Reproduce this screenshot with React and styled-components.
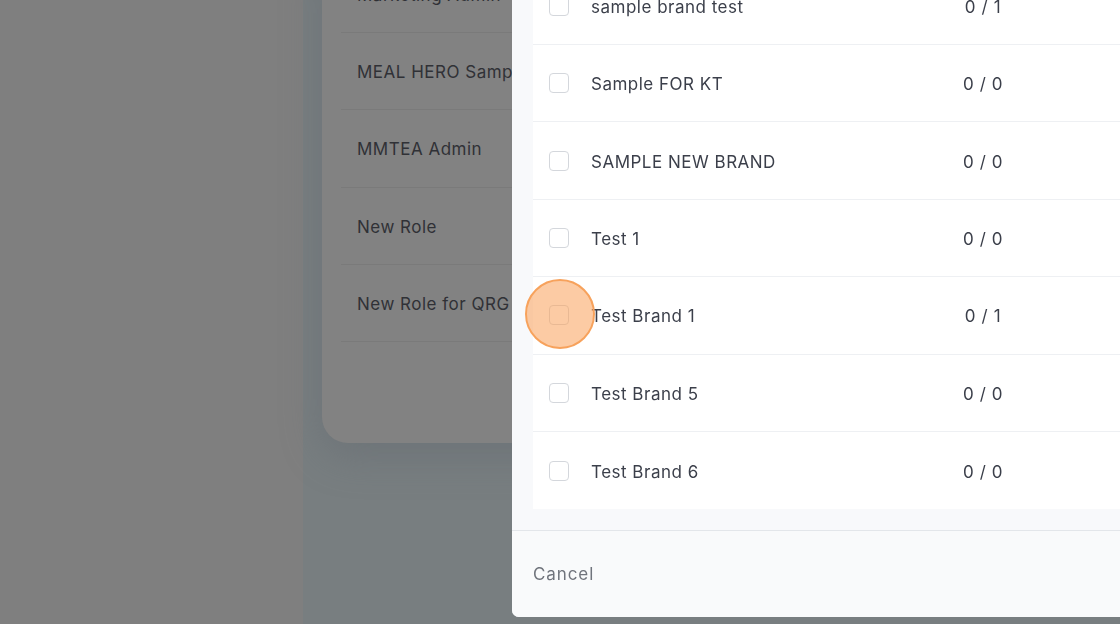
import React from 'react';
import styled, { createGlobalStyle } from 'styled-components';

const GlobalStyle = createGlobalStyle`
  html, body {
    margin: 0;
    padding: 0;
    width: 1120px;
    height: 624px;
    overflow: hidden;
    font-family: 'Inter', 'Liberation Sans', sans-serif;
  }
  #root {
    height: 624px;
  }
`;

const Page = styled.div`
  display: flex;
  height: 624px;
  width: 1120px;
  overflow: hidden;
`;

const Sidebar = styled.div`
  width: 303px;
  flex-shrink: 0;
  background: #7f7f7f;
`;

const Main = styled.div`
  flex: 1;
  background: #787e80;
  padding: 0 0 181px 19px;
  display: flex;
  flex-direction: column;
  justify-content: flex-end;
`;

const RoleCard = styled.div`
  background: #828282;
  border-radius: 0 0 0 26px;
  padding: 0 0 101px 19px;
  box-shadow: 0 12px 40px rgba(95, 102, 108, 0.45);
`;

const RoleRow = styled.div`
  height: 77.25px;
  box-sizing: border-box;
  border-bottom: 1px solid #7a7a7a;
  padding: 2px 0 0 16px;
  display: flex;
  align-items: center;
  font-size: 17px;
  letter-spacing: 0.5px;
  color: #303136;
  white-space: nowrap;
`;

const Modal = styled.div`
  position: fixed;
  left: 512px;
  bottom: 7px;
  width: 720px;
  background: #f8f9fb;
  border-radius: 0 0 0 7px;
  display: flex;
  flex-direction: column;
  overflow: hidden;
`;

const ListWrap = styled.div`
  padding: 0 0 21px 21px;
`;

const BrandList = styled.div`
  background: #ffffff;
`;

const BrandRow = styled.div`
  height: ${(p) => (p.$last ? '77px' : '77.4px')};
  box-sizing: border-box;
  border-bottom: ${(p) => (p.$last ? 'none' : '1px solid #eef0f3')};
  display: grid;
  grid-template-columns: 20px 350px 80px;
  column-gap: 22px;
  align-items: center;
  padding: 2px 0 0 16px;
`;

const Checkbox = styled.span`
  width: 20px;
  height: 20px;
  box-sizing: border-box;
  border: 1.5px solid #d4d7dc;
  border-radius: 4px;
  background: #fff;
  margin-top: -2px;
`;

const BrandName = styled.span`
  font-size: 17px;
  letter-spacing: 0.5px;
  color: #3b3f4a;
  white-space: nowrap;
`;

const Count = styled.span`
  font-size: 17px;
  letter-spacing: 0.6px;
  color: #3b3f4a;
  text-align: center;
  margin-left: -40px;
`;

const Footer = styled.div`
  height: 86px;
  border-top: 1px solid #e3e6ea;
  display: flex;
  align-items: center;
  padding-left: 21px;
  background: #f9fafb;
`;

const CancelButton = styled.button`
  border: none;
  background: none;
  padding: 0;
  font-family: inherit;
  font-size: 17px;
  letter-spacing: 0.9px;
  color: #70747c;
  cursor: pointer;
`;

const ClickMarker = styled.div`
  position: fixed;
  left: 525px;
  top: 279px;
  width: 70px;
  height: 70px;
  box-sizing: border-box;
  border-radius: 50%;
  border: 2px solid #f7a25c;
  background: rgba(250, 160, 90, 0.55);
  pointer-events: none;
`;

const roles = ['Marketing Admin', 'MEAL HERO Sample', 'MMTEA Admin', 'New Role', 'New Role for QRG'];

const brands = [
  { name: 'sample brand test', count: '0 / 1' },
  { name: 'Sample FOR KT', count: '0 / 0' },
  { name: 'SAMPLE NEW BRAND', count: '0 / 0' },
  { name: 'Test 1', count: '0 / 0' },
  { name: 'Test Brand 1', count: '0 / 1' },
  { name: 'Test Brand 5', count: '0 / 0' },
  { name: 'Test Brand 6', count: '0 / 0' },
];

export default function App() {
  return (
    <>
      <GlobalStyle />
      <Page>
        <Sidebar />
        <Main>
          <RoleCard>
            {roles.map((r) => (
              <RoleRow key={r}>{r}</RoleRow>
            ))}
          </RoleCard>
        </Main>
      </Page>
      <Modal>
        <ListWrap>
          <BrandList>
            {brands.map((b, i) => (
              <BrandRow key={b.name} $last={i === brands.length - 1}>
                <Checkbox />
                <BrandName>{b.name}</BrandName>
                <Count>{b.count}</Count>
              </BrandRow>
            ))}
          </BrandList>
        </ListWrap>
        <Footer>
          <CancelButton>Cancel</CancelButton>
        </Footer>
      </Modal>
      <ClickMarker />
    </>
  );
}
